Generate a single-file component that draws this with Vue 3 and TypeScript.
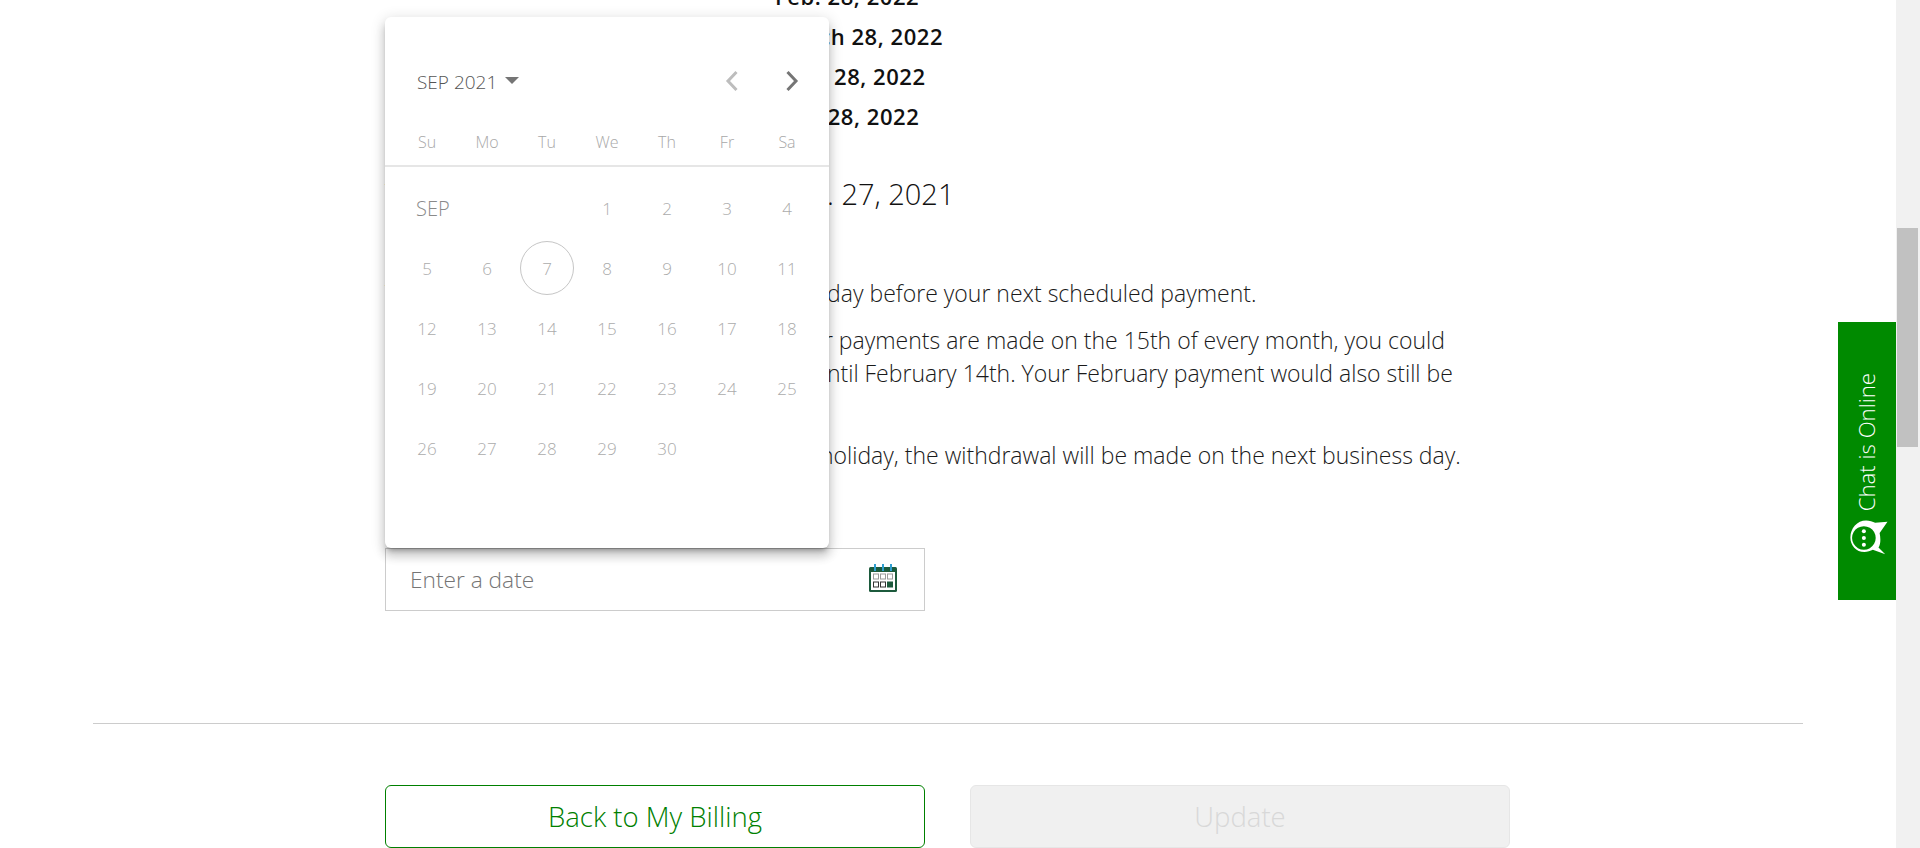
<template>
  <div class="screen">
    <main class="page">
      <section class="content">
        <div class="dates">
          <span v-for="d in dueDates" :key="d">{{ d }}</span>
        </div>

        <h2 class="next-date">Your upcoming payment date Sep. 27, 2021</h2>

        <p class="copy first">You can change your billing date up to any day before your next scheduled payment.</p>
        <p class="copy example">
          <span>For instance, if today is January 10 and your payments are made on the 15th of every month, you could</span>
          <span>extend your next payment's set due date until February 14th. Your February payment would also still be</span>
        </p>
        <p class="copy last">If your payment day falls on a weekend or holiday, the withdrawal will be made on the next business day.</p>

        <div class="date-field">
          <span class="placeholder">Enter a date</span>
          <svg class="cal-icon" width="30" height="30" viewBox="0 0 30 30">
            <rect x="1" y="4" width="28" height="25" rx="1.5" fill="#1c5a3c" />
            <rect x="3" y="9" width="24" height="18" fill="#fff" />
            <path d="M7 1v7M15 1v7M23 1v7" stroke="#2f9fd0" stroke-width="2" />
            <g fill="#fff" stroke="#9a9a9a" stroke-width="1">
              <rect x="5.5" y="11" width="5" height="5" />
              <rect x="12.5" y="11" width="5" height="5" />
              <rect x="19.5" y="11" width="5" height="5" />
              <rect x="5.5" y="19" width="5" height="5" stroke="#333" />
              <rect x="12.5" y="19" width="5" height="5" stroke="#333" />
            </g>
            <rect x="19" y="18.5" width="6" height="6" fill="#1c5a3c" />
          </svg>
        </div>
      </section>

      <hr class="divider" />

      <div class="actions">
        <button class="btn btn-back" type="button">Back to My Billing</button>
        <button class="btn btn-update" type="button" disabled>Update</button>
      </div>
    </main>

    <div class="scrollbar"><div class="thumb"></div></div>

    <div class="picker">
      <div class="picker-head">
        <span class="period">SEP 2021</span>
        <span class="caret"></span>
        <span class="spacer"></span>
        <svg class="chev prev" width="14" height="22" viewBox="0 0 14 22">
          <path d="M11.5 2 3 11l8.5 9" fill="none" stroke="#bdbdbd" stroke-width="3" />
        </svg>
        <svg class="chev" width="14" height="22" viewBox="0 0 14 22">
          <path d="M2.5 2 11 11l-8.5 9" fill="none" stroke="#757575" stroke-width="3" />
        </svg>
      </div>
      <div class="weekdays">
        <span v-for="d in weekdays" :key="d">{{ d }}</span>
      </div>
      <div class="days">
        <span class="month-label">SEP</span>
        <span v-for="n in days" :key="n" class="day">
          <span :class="['day-inner', { today: n === today }]">{{ n }}</span>
        </span>
      </div>
    </div>

    <div class="chat-tab">
      <span class="chat-text">Chat is Online</span>
      <svg class="chat-icon" width="45" height="45" viewBox="0 0 40 40">
        <path
          fill="#fff"
          fill-rule="evenodd"
          d="M3 19C3 11 9 4 17 4c3 0 6 1 8 2l11-1-7 10c1 5 1 10-1 13l6 6-11-4c-2 1-5 2-7.5 2C8 32 3 26 3 19zM15 9a10.5 10.5 0 1 0 .01 0z"
        />
        <circle cx="15" cy="13.5" r="1.8" fill="#fff" />
        <circle cx="15" cy="19.5" r="1.8" fill="#fff" />
        <circle cx="15" cy="25.5" r="1.8" fill="#fff" />
      </svg>
    </div>
  </div>
</template>

<script setup lang="ts">
const dueDates: string[] = ['Feb. 28, 2022', 'March 28, 2022', 'April 28, 2022', 'May 28, 2022']

const weekdays = ['Su', 'Mo', 'Tu', 'We', 'Th', 'Fr', 'Sa']
const days: number[] = Array.from({ length: 30 }, (_, i) => i + 1)
const today = 7
</script>

<style>
html,
body {
  margin: 0;
  background: #fff;
  overflow: hidden;
}
</style>

<style scoped>
.screen {
  position: relative;
  display: flex;
  height: 848px;
  overflow: hidden;
  font-family: "Open Sans", "Liberation Sans", sans-serif;
  color: #222;
}

.page {
  flex: 1;
  min-width: 0;
}

.content {
  margin-top: -24px;
  padding-left: 385px;
}

.dates {
  display: flex;
  flex-direction: column;
  padding-left: 390px;
  font-size: 22px;
  font-weight: 600;
  letter-spacing: 0.55px;
  line-height: 40px;
  color: #111;
}

.next-date {
  margin: 38px 0 0;
  font-size: 29px;
  font-weight: 300;
  line-height: 40px;
  color: #111;
  white-space: nowrap;
}

.copy {
  margin: 0;
  font-size: 23px;
  font-weight: 300;
  line-height: 33px;
  color: #1a1a1a;
  white-space: nowrap;
}

.copy span {
  display: block;
}

.first {
  margin-top: 63px;
}

.example {
  margin-top: 14px;
}

.last {
  margin-top: 49px;
}

.date-field {
  display: flex;
  align-items: center;
  justify-content: space-between;
  box-sizing: border-box;
  width: 540px;
  height: 63px;
  margin-top: 76px;
  padding: 0 26px 0 24px;
  border: 1px solid #ccc;
}

.placeholder {
  font-size: 22.7px;
  font-weight: 300;
  color: #757575;
}

.cal-icon {
  margin-top: -4px;
}

.divider {
  height: 1px;
  margin: 112px 93px 0;
  border: 0;
  background: #ccc;
}

.actions {
  display: flex;
  gap: 45px;
  margin-top: 61px;
  padding-left: 385px;
}

.btn {
  box-sizing: border-box;
  width: 540px;
  height: 63px;
  border-radius: 6px;
  font-family: inherit;
  font-size: 27.5px;
  font-weight: 300;
}

.btn-back {
  border: 1px solid #008000;
  background: #fff;
  color: #008000;
}

.btn-update {
  border: 1px solid #e6e6e6;
  background: #f0f0f0;
  color: #d8d8d8;
}

.scrollbar {
  flex: none;
  width: 24px;
  background: #f1f1f1;
}

.thumb {
  width: 21px;
  height: 219px;
  margin: 228px 0 0 1px;
  background: #c1c1c1;
}

/* overlays */
.picker {
  position: absolute;
  top: 17px;
  left: 385px;
  box-sizing: border-box;
  width: 444px;
  height: 531px;
  padding: 0 12px;
  border-radius: 6px;
  background: #fff;
  box-shadow: 0 5px 5px -3px rgba(0, 0, 0, 0.3), 0 8px 10px 1px rgba(0, 0, 0, 0.14), 0 3px 14px 2px rgba(0, 0, 0, 0.12);
}

.picker-head {
  display: flex;
  align-items: center;
  height: 44px;
  padding: 42px 18px 0 20px;
  color: #555;
}

.period {
  margin-top: 2px;
  font-size: 19px;
  font-weight: 300;
}

.caret {
  width: 0;
  height: 0;
  margin: -1px 0 0 8px;
  border-top: 7px solid #757575;
  border-left: 7px solid transparent;
  border-right: 7px solid transparent;
}

.spacer {
  flex: 1;
}

.chev + .chev {
  margin-left: 46px;
}

.weekdays {
  display: grid;
  grid-template-columns: repeat(7, 60px);
  height: 38px;
  margin: 24px -12px 0;
  padding: 0 12px;
  border-bottom: 2px solid #e6e6e6;
  font-size: 16px;
  font-weight: 300;
  line-height: 30px;
  color: #a8a8a8;
  text-align: center;
}

.days {
  display: grid;
  grid-template-columns: repeat(7, 60px);
  grid-auto-rows: 60px;
  padding-top: 11px;
  font-size: 17px;
  font-weight: 300;
  color: #ababab;
}

.month-label {
  grid-column: 1 / span 3;
  align-self: center;
  padding-left: 19px;
  font-size: 20px;
  color: #8a8a8a;
}

.day {
  display: flex;
  align-items: center;
  justify-content: center;
}

.day-inner {
  display: flex;
  align-items: center;
  justify-content: center;
  box-sizing: border-box;
  width: 54px;
  height: 54px;
  border: 1px solid transparent;
  border-radius: 50%;
}

.today {
  border-color: #c6c6c6;
}

.chat-tab {
  position: absolute;
  top: 322px;
  left: 1838px;
  display: flex;
  flex-direction: column;
  align-items: center;
  box-sizing: border-box;
  width: 58px;
  height: 278px;
  padding-top: 51px;
  background: #008a00;
  color: #fff;
}

.chat-text {
  writing-mode: vertical-rl;
  transform: rotate(180deg);
  font-size: 22.2px;
  font-weight: 300;
  line-height: 30px;
  white-space: nowrap;
}

.chat-icon {
  margin: 5px 0 0 4px;
}
</style>
